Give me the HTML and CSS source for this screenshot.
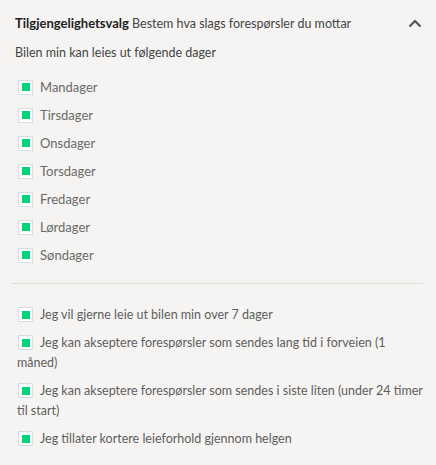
FILE: index.html
```html
<!DOCTYPE html>
<html lang="no">
<head>
    <meta charset="UTF-8">
    <meta name="viewport" content="width=device-width, initial-scale=1.0">
    <title>Tilgjengelighetsvalg</title>
    <link rel="stylesheet" href="styles.css">
</head>
<body>
    <div class="panel">
        <!-- overskrift -->
        <div class="header">
            <p class="title"><strong>Tilgjengelighetsvalg</strong> Bestem hva slags forespørsler du mottar</p>
            <svg class="chevron" width="14" height="9" viewBox="0 0 14 9">
                <path d="M1.5 7.5 L7 2 L12.5 7.5" fill="none" stroke="#555" stroke-width="2.2"/>
            </svg>
        </div>

        <p class="subtitle">Bilen min kan leies ut følgende dager</p>

        <!-- dager -->
        <ul class="days">
            <li><span class="check"></span>Mandager</li>
            <li><span class="check"></span>Tirsdager</li>
            <li><span class="check"></span>Onsdager</li>
            <li><span class="check"></span>Torsdager</li>
            <li><span class="check"></span>Fredager</li>
            <li><span class="check"></span>Lørdager</li>
            <li><span class="check"></span>Søndager</li>
        </ul>

        <hr class="divider">

        <!-- andre valg -->
        <ul class="options">
            <li><span class="check"></span>Jeg vil gjerne leie ut bilen min over 7 dager</li>
            <li><span class="check"></span>Jeg kan akseptere forespørsler som sendes lang tid i forveien (1 måned)</li>
            <li><span class="check"></span>Jeg kan akseptere forespørsler som sendes i siste liten (under 24 timer til start)</li>
            <li><span class="check"></span>Jeg tillater kortere leieforhold gjennom helgen</li>
        </ul>
    </div>
</body>
</html>
```

FILE: styles.css
```css
body {
    font-family: Lato, "Open Sans", sans-serif;
    font-size: 12.5px;
    background-color: #f5f4f2;
    color: #666;
    margin: 0;
}

.panel {
    padding: 14px 13px 0 15px;
}

.header {
    display: flex;
    align-items: center;
    justify-content: space-between;
}

.title {
    margin: 0;
    line-height: 18px;
    color: #444;
}

.title strong {
    color: #222;
    font-size: 13px;
}

.chevron {
    margin-right: 1px;
}

.subtitle {
    margin: 11px 0 0 0;
    line-height: 18px;
    color: #444;
}

.days, .options {
    list-style: none;
    margin: 0;
    padding: 0;
}

.days {
    margin-top: 11px;
}

.days li {
    display: flex;
    align-items: center;
    height: 28px;
    padding-left: 3px;
    font-size: 13px;
    color: #6a6a6a;
}

.check {
    display: inline-block;
    width: 13px;
    height: 13px;
    border: 1px solid #dcdcdc;
    background-color: #fff;
    position: relative;
    margin-right: 7px;
    box-sizing: content-box;
}

.check::after {
    content: "";
    position: absolute;
    left: 2.5px;
    top: 2.5px;
    width: 8px;
    height: 8px;
    background-color: #00d47a;
}

.divider {
    border: none;
    border-top: 1px solid #dddbd8;
    margin: 14px 0 0 -3px;
}

.options {
    margin-top: 21px;
}

.options li {
    line-height: 20px;
    margin-bottom: 8px;
    padding-left: 2px;
    color: #5e5e5e;
}

.options .check {
    vertical-align: -3px;
    margin-left: 1px;
}
```
